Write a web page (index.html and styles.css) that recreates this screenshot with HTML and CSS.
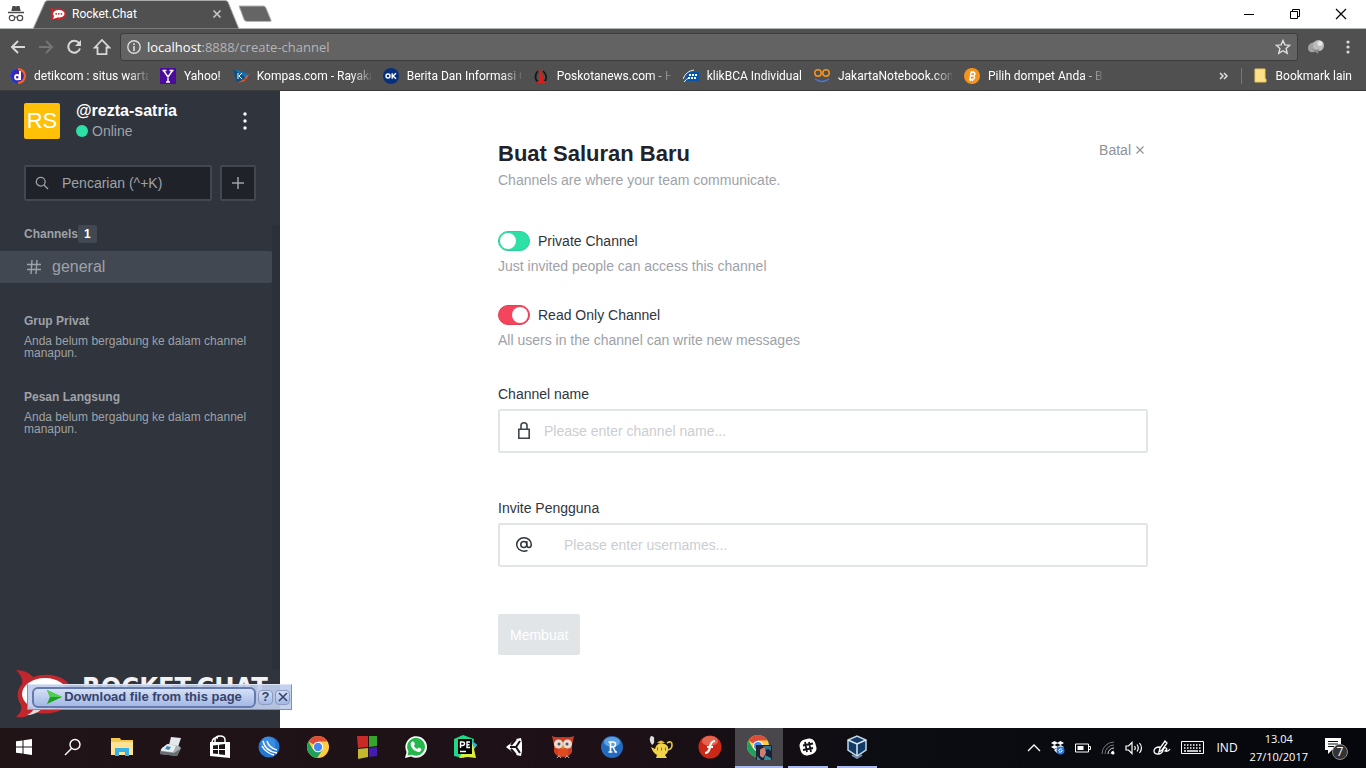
FILE: index.html
```html
<!DOCTYPE html>
<html lang="id">
<head>
<meta charset="utf-8">
<meta name="viewport" content="width=device-width, initial-scale=1">
<title>Rocket.Chat</title>
<link rel="stylesheet" href="styles.css">
</head>
<body>
<header class="browser">
  <div class="tabstrip">
    <svg class="incognito" width="16" height="18" viewBox="0 0 16 18"><path d="M4.500 1h2.200l1.300.6L9.300 1h2.200l1.200 5H3.300z" fill="#4a4a4a"/><path d="M0 7.500h16" stroke="#4a4a4a" stroke-width="1.500"/><g fill="none" stroke="#4a4a4a" stroke-width="1.200"><circle cx="4" cy="13" r="2.700"/><circle cx="12" cy="13" r="2.700"/><path d="M6.500 12.500q1.500-1 3 0"/></g></svg>
    <div class="tab">
      <svg class="tab-shape" width="208" height="29" viewBox="0 0 208 29"><path d="M1 29L13 2Q14 .5 16 .5H193Q195 .5 196 2L207 29z" fill="#505050" stroke="#a9aca9"/></svg>
      <svg class="favicon" width="16" height="14" viewBox="0 0 16 14"><path d="M0 1q3 0 4.500 1.300C11 0 16 3 16 7s-5 7-11.500 4.700Q3 13 0 13q2-2 1.500-4Q0 7 1.500 5 2 3 0 1z" fill="#d2232a"/><ellipse cx="8.800" cy="6.800" rx="5.700" ry="3.800" fill="#fff"/><path d="M3 12l1.500-4 3 2.400z" fill="#fff"/><g fill="#d2232a"><circle cx="6.200" cy="6.800" r=".9"/><circle cx="8.800" cy="6.800" r=".9"/><circle cx="11.400" cy="6.800" r=".9"/></g></svg>
      <span class="tab-title">Rocket.Chat</span>
      <button class="bare tab-close" aria-label="Tutup tab"><svg width="10" height="10" viewBox="0 0 10 10"><path d="M1.500 1.500l7 7M8.500 1.500l-7 7" stroke="#c8c8c8" stroke-width="1.600"/></svg></button>
    </div>
    <button class="bare new-tab" aria-label="Tab baru"><svg width="34" height="18" viewBox="0 0 34 18"><path d="M1 1h25q1 0 2 2l5 12q.5 1.500-1 1.500H9q-2 0-3-2z" fill="#656565" stroke="#b5b5b5"/></svg></button>
    <div class="window-controls">
      <button class="bare" aria-label="Kecilkan"><svg width="12" height="12" viewBox="0 0 12 12"><path d="M1 6.500h10" stroke="#000"/></svg></button>
      <button class="bare" aria-label="Pulihkan"><svg width="12" height="12" viewBox="0 0 12 12" fill="none" stroke="#000"><path d="M1.500 3.500h7v7h-7zM3.500 3.500v-2h7v7h-2"/></svg></button>
      <button class="bare" aria-label="Tutup"><svg width="12" height="12" viewBox="0 0 12 12"><path d="M1 1l10 10M11 1L1 11" stroke="#000" stroke-width="1.200"/></svg></button>
    </div>
  </div>
  <div class="toolbar">
    <button class="bare" aria-label="Kembali"><svg width="16" height="16" viewBox="0 0 16 16" fill="none" stroke="#d8d8d8" stroke-width="2"><path d="M15 8H2.500M8 2L2 8l6 6"/></svg></button>
    <button class="bare" aria-label="Maju"><svg width="16" height="16" viewBox="0 0 16 16" fill="none" stroke="#757575" stroke-width="2"><path d="M1 8h12.500M8 2l6 6-6 6"/></svg></button>
    <button class="bare" aria-label="Muat ulang"><svg width="16" height="16" viewBox="0 0 16 16"><path d="M13 4A6 6 0 1 0 14 9.500" fill="none" stroke="#d8d8d8" stroke-width="2"/><path d="M15 1v6H9z" fill="#d8d8d8"/></svg></button>
    <button class="bare" aria-label="Beranda"><svg width="18" height="18" viewBox="0 0 18 18"><path d="M1.800 9.500L9 2l7.200 7.500h-2.700v6.700h-9V9.500z" fill="none" stroke="#d8d8d8" stroke-width="1.800"/></svg></button>
    <div class="omnibox">
      <svg width="14" height="14" viewBox="0 0 14 14"><circle cx="7" cy="7" r="6.200" fill="none" stroke="#ddd" stroke-width="1.400"/><path d="M7 3.200v1.700M7 6v5" stroke="#ddd" stroke-width="1.600"/></svg>
      <span class="url"><b>localhost</b>:8888/create-channel</span>
      <button class="bare" aria-label="Tandai"><svg width="16" height="16" viewBox="0 0 16 16"><path d="M8 1.500l1.900 4.400 4.800.4-3.600 3.200 1.100 4.700L8 11.700l-4.200 2.500 1.100-4.700L1.300 6.300l4.800-.4z" fill="none" stroke="#ddd" stroke-width="1.400"/></svg></button>
    </div>
    <button class="bare extension" aria-label="Ekstensi"><svg width="18" height="16" viewBox="0 0 18 16"><path d="M8 3Q1 4 1 9q0 5 6 4l8-2-7-2z" fill="#a2a2a2"/><circle cx="11.500" cy="6.500" r="5.500" fill="#bcbcbc"/><circle cx="13" cy="4.500" r="2.500" fill="#e6e6e6"/><path d="M4 9q4 3 8 1l-1 5z" fill="#8a8a8a"/></svg></button>
    <button class="bare" aria-label="Menu"><svg width="4" height="14" viewBox="0 0 4 14" fill="#d8d8d8"><circle cx="2" cy="2" r="1.600"/><circle cx="2" cy="7" r="1.600"/><circle cx="2" cy="12" r="1.600"/></svg></button>
  </div>
  <nav class="bookmarks">
    <a href="#"><svg width="16" height="16" viewBox="0 0 16 16"><circle cx="8" cy="8" r="8" fill="#f26522"/><path d="M8 0a8 8 0 0 0 0 16z" fill="#1b3fbd"/><circle cx="8" cy="8" r="5.800" fill="#4221b5"/><circle cx="7.200" cy="9.200" r="2.200" fill="none" stroke="#fff" stroke-width="1.800"/><path d="M10 3v9" stroke="#fff" stroke-width="2"/></svg><span>detikcom : situs warta</span></a>
    <a href="#"><svg width="16" height="16" viewBox="0 0 16 16"><path d="M0 0h16v16H0z" fill="#4b0c9c"/><path d="M3.500 2.500L8 9l4.500-6.500M8 8.500V14M2.500 2.500h4M9.500 2.500h4M6 14h4" stroke="#fff" stroke-width="1.400" fill="none"/></svg><span>Yahoo!</span></a>
    <a href="#"><svg width="16" height="16" viewBox="0 0 16 16"><path d="M0 1l16 5-5 4z" fill="#0d74bb"/><path d="M0 1l4 14 8-6z" fill="#075088"/><path d="M16 6l-4 3 1 3zM4 15l8-4v2z" fill="#f15a24"/><path d="M5 5v6M9 5L6 8l3 3" stroke="#fff" fill="none"/></svg><span>Kompas.com - Rayaka</span></a>
    <a href="#"><svg width="16" height="16" viewBox="0 0 16 16"><circle cx="8" cy="8" r="8" fill="#05307c"/><circle cx="5" cy="8" r="2" fill="none" stroke="#fff" stroke-width="1.400"/><path d="M9.200 5.300v5.400M13 5.300L10 8l3 2.700" fill="none" stroke="#fff" stroke-width="1.400"/></svg><span>Berita Dan Informasi O</span></a>
    <a href="#"><svg width="16" height="16" viewBox="0 0 16 16"><path d="M5 3Q2 6 2.500 10 3 13 6 14M10 3q4 4 3 8-1 3-3 3" fill="none" stroke="#151515" stroke-width="1.600"/><path d="M8 1q1.500 2 1 4 1.500 3 1 8h2l1 2H3l2-2h1Q5.500 8 7 5 6.500 3 8 1z" fill="#d91e1e"/></svg><span>Poskotanews.com - H</span></a>
    <a href="#"><svg width="16" height="16" viewBox="0 0 16 16"><path d="M4 4h12v9H2z" fill="#0754a5"/><path d="M6 7h8M5 10h9" stroke="#fff" stroke-width="2" stroke-dasharray="2 1"/><path d="M0 11Q3 3 11 2M1 14q2-3 5-4" fill="none" stroke="#eee"/></svg><span>klikBCA Individual</span></a>
    <a href="#"><svg width="16" height="16" viewBox="0 0 16 16" fill="none"><circle cx="4" cy="5" r="3.200" stroke="#f7941d" stroke-width="1.500"/><circle cx="12" cy="5" r="3.200" stroke="#f7941d" stroke-width="1.500"/><path d="M1 11q7 5 14 0" stroke="#4c7bd9" stroke-width="1.500"/></svg><span>JakartaNotebook.com</span></a>
    <a href="#"><svg width="16" height="16" viewBox="0 0 16 16"><circle cx="8" cy="8" r="8" fill="#f7931a"/><path d="M6.500 4.500h3q2 .4 1.400 2-.5 1.300-2 1.300H6M9 8q1.800.4 1.400 2-.5 1.500-2.400 1.500H5M7 4.500l-1 7M7.500 3v1.500M9.500 3v1.500M6.500 11.500V13M8.500 11.500V13" fill="none" stroke="#fff" stroke-width="1.400"/></svg><span>Pilih dompet Anda - B</span></a>
    <button class="bare more" aria-label="Bookmark lainnya"><svg width="10" height="8" viewBox="0 0 10 8"><path d="M1 1l3 3-3 3M5 1l3 3-3 3" fill="none" stroke="#ddd" stroke-width="1.500"/></svg></button>
    <a class="other" href="#"><svg width="14" height="16" viewBox="0 0 14 16"><path d="M1 1h10v10h1v3H1z" fill="#fee08b" stroke="#f1c84c"/></svg><span>Bookmark lain</span></a>
  </nav>
</header>

<div class="page">
  <aside class="sidebar">
    <div class="account">
      <div class="avatar">RS</div>
      <div class="who"><strong>@rezta-satria</strong><span class="status">Online</span></div>
      <button class="bare" aria-label="Opsi"><svg width="6" height="18" viewBox="0 0 6 18" fill="#fff"><circle cx="3" cy="2" r="1.700"/><circle cx="3" cy="9" r="1.700"/><circle cx="3" cy="16" r="1.700"/></svg></button>
    </div>
    <div class="search-row">
      <label class="search"><svg width="14" height="14" viewBox="0 0 14 14" fill="none" stroke="#9ea2a8" stroke-width="1.300"><circle cx="5.700" cy="5.700" r="4.400"/><path d="M9 9l4 4"/></svg><input type="search" aria-label="Pencarian" placeholder="Pencarian (^+K)"></label>
      <button class="add" aria-label="Buat saluran"><svg width="12" height="12" viewBox="0 0 12 12"><path d="M6 0v12M0 6h12" stroke="#9ea2a8" stroke-width="1.500"/></svg></button>
    </div>
    <div class="rooms">
      <h3>Channels<span class="badge">1</span></h3>
      <a class="room" href="#"><svg width="14" height="14" viewBox="0 0 14 14"><path d="M5 0L4 14M10 0L9 14M0 4.500h14M0 9.500h14" stroke="#9ea2a8" stroke-width="1.400"/></svg>general</a>
      <section><h3>Grup Privat</h3><p>Anda belum bergabung ke dalam channel manapun.</p></section>
      <section><h3>Pesan Langsung</h3><p>Anda belum bergabung ke dalam channel manapun.</p></section>
    </div>
    <footer class="brand">
      <svg width="60" height="50" viewBox="0 0 60 50"><path d="M0 1Q11 1 17 8C35 2 56 9 56 25S35 48 18 43Q10 50 0 48 7 42 5 36C0 29 1 20 6 15 8 8 0 1 0 1z" fill="#c1272d"/><path d="M11 46q6-3 7-7l8 1q-7 6-15 6z" fill="#ddd"/><ellipse cx="29" cy="25" rx="23" ry="16" fill="#fff"/><g fill="#c1272d"><circle cx="19" cy="25" r="3"/><circle cx="29" cy="25" r="3"/><circle cx="39" cy="25" r="3"/></g></svg>
      <span>ROCKET.CHAT</span>
    </footer>
    <div class="download">
      <button class="download-main"><svg width="16" height="14" viewBox="0 0 16 14"><path d="M1 0l15 7L1 14l3-7z" fill="#18a322"/><path d="M1 0l15 7H4z" fill="#4fd04c"/></svg>Download file from this page</button>
      <button class="download-small">?</button>
      <button class="download-small" aria-label="Tutup"><svg width="10" height="10" viewBox="0 0 10 10"><path d="M1 1l8 8M9 1L1 9" stroke="#37436c" stroke-width="1.600"/></svg></button>
    </div>
  </aside>

  <main class="content">
    <form class="create">
      <div class="heading">
        <div><h1>Buat Saluran Baru</h1><p>Channels are where your team communicate.</p></div>
        <button type="button" class="bare cancel">Batal<svg width="8" height="8" viewBox="0 0 8 8"><path d="M.5.5l7 7M7.500.5l-7 7" stroke="#8f9298" stroke-width="1.200"/></svg></button>
      </div>
      <div class="options">
        <div class="option"><label><input class="switch" type="checkbox">Private Channel</label><p>Just invited people can access this channel</p></div>
        <div class="option"><label><input class="switch" type="checkbox" checked>Read Only Channel</label><p>All users in the channel can write new messages</p></div>
      </div>
      <div class="field">
        <label for="name">Channel name</label>
        <div class="box"><svg width="20" height="20" viewBox="0 0 20 20" fill="none" stroke="#3f454d" stroke-width="1.600"><path d="M4.800 8.300h10.400v9H4.800zM7 8V4.500Q7 1.800 10 1.800t3 2.700V8"/></svg><input id="name" type="text" placeholder="Please enter channel name..."></div>
      </div>
      <div class="field">
        <label for="users">Invite Pengguna</label>
        <div class="box users"><svg width="20" height="20" viewBox="0 0 20 20" fill="none" stroke="#2f343d" stroke-width="1.500"><circle cx="9.800" cy="9.500" r="3"/><path d="M12.800 6v4.300q0 2.200 2.200 2.200t2.300-3.200A7.300 6.700 0 1 0 10 16.200q2 0 3.500-.8"/></svg><input id="users" type="text" placeholder="Please enter usernames..."></div>
      </div>
      <button class="submit" disabled>Membuat</button>
    </form>
  </main>
</div>

<footer class="taskbar">
  <button class="bare" aria-label="Start"><svg width="16" height="16" viewBox="0 0 16 16" fill="#fff"><path d="M0 2.300L6.500 1.400v6.100H0zM7.500 1.200L16 0v7.500H7.500zM0 8.500h6.500v6.100L0 13.700zM7.500 8.500H16V16l-8.500-1.200z"/></svg></button>
  <button class="bare" aria-label="Cari"><svg width="18" height="18" viewBox="0 0 18 18" fill="none" stroke="#fff" stroke-width="1.400"><circle cx="11" cy="6.500" r="5"/><path d="M7.500 10.500L1 17"/></svg></button>
  <button class="bare" aria-label="File Explorer"><svg width="22" height="20" viewBox="0 0 22 20"><path d="M0 1h9l1 2h12v15H0z" fill="#f5c94c"/><path d="M0 5h22v13H0z" fill="#ffe395"/><path d="M4 11h14v8h-4v-4H8v4H4z" fill="#35b3e8"/></svg></button>
  <button class="bare" aria-label="Faks"><svg width="24" height="22" viewBox="0 0 24 22"><path d="M12 1l10 1-3 9-9-2z" fill="#e4e8ea"/><path d="M8 8l12 2 2 2-4 8-17-2 1-5z" fill="#aab0b4"/><path d="M3 12l6-4 8 2-3 6-12-1z" fill="#e8eef0"/><path d="M8 10l4 1-2 3-4-1z" fill="#398dbd"/><path d="M1 15l14 2 6-4-3 7-17-2z" fill="#656c72"/></svg></button>
  <button class="bare" aria-label="Store"><svg width="22" height="24" viewBox="0 0 22 24"><path d="M6 8V5q0-4 5-4t5 4v3M3 7q1-5 6-4" fill="none" stroke="#fff" stroke-width="1.500"/><path d="M1 7h20v16l-20-2z" fill="#fff"/><path d="M4 10.500l5-.6V14H4zM10 9.700l6-.7v5h-6zM4 15h5v4l-5-.6zM10 15h6v5l-6-.8z" fill="#1c1217"/></svg></button>
  <button class="bare" aria-label="JDownloader"><svg width="22" height="22" viewBox="0 0 22 22"><circle cx="11" cy="11" r="10.500" fill="#2376d2"/><circle cx="10" cy="8" r="7.500" fill="#4a9bea" opacity=".6"/><path d="M5 5q2 10 14 12M9 5q2 7 10 9M4 10q4 7 12 9" fill="none" stroke="#fff" stroke-width="1.400"/></svg></button>
  <button class="bare" aria-label="Chrome"><svg width="22" height="22" viewBox="0 0 22 22"><circle cx="11" cy="11" r="11" fill="#fc4"/><path d="M11 11L1.500 5.500A11 11 0 0 1 20.500 5.500H11z" fill="#dd4b39"/><path d="M11 11l-5 2.500L1.500 5.500A11 11 0 0 0 10 22l5.500-8z" fill="#1fa15d"/><circle cx="11" cy="11" r="5.200" fill="#fff"/><circle cx="11" cy="11" r="4.200" fill="#4688f4"/></svg></button>
  <button class="bare" aria-label="Winamp"><svg width="22" height="24" viewBox="0 0 22 24"><path d="M1 1h11v11L2 13z" fill="#c82b26"/><path d="M13 1h8v10l-8 1z" fill="#37a52d"/><path d="M2 14l10-1v9l-10 2z" fill="#c6b82e"/><path d="M13 13l8-1v9l-8 1z" fill="#451bb4"/></svg></button>
  <button class="bare" aria-label="WhatsApp"><svg width="22" height="22" viewBox="0 0 22 22"><path d="M0 22l1.600-6A10.800 10.800 0 1 1 6 20.500z" fill="#fff"/><path d="M2.500 19.500l1-4A8.900 8.900 0 1 1 7 18.700z" fill="#24b84c"/><path d="M7 5.500l2 .2.900 2.500-1.100 1.500q1.200 2.300 3.500 3.200l1.300-1.400 2.700 1.200q.3 3-3 3.200Q7 14.500 5.600 9 5.500 6.500 7 5.500z" fill="#fff"/></svg></button>
  <button class="bare" aria-label="PyCharm"><svg width="24" height="24" viewBox="0 0 24 24"><path d="M1 4l9-4 11 4-3 14-8 5-9-2z" fill="#21d789"/><path d="M18 5l6 5-3 4 2 9-8-1-9 1 4-7z" fill="#dcef3c"/><path d="M18 5l6 5-3 3z" fill="#18b6ef"/><path d="M5 4h14v15H5z" fill="#000"/><path d="M7.500 13V7h2q2 0 2 1.700t-2 1.800h-2M17 7h-3v5.500h3M14 9.800h2.500M7 16.500h6" fill="none" stroke="#fff" stroke-width="1.400"/></svg></button>
  <button class="bare" aria-label="Unity"><svg width="18" height="18" viewBox="0 0 18 18"><path d="M1 9l10-8 5-1 1 5v8l-1 5-5-1z" fill="#fff"/><path d="M5 9h6l4-6M11 9l4 6M11 1L6 7M11 17L6 11" stroke="#1b1116" stroke-width="2" fill="none"/></svg></button>
  <button class="bare" aria-label="Hootsuite"><svg width="24" height="24" viewBox="0 0 24 24"><path d="M1 1q4 2 11 1 7 1 11-1l-2 9v7q-2 5-9 5t-9-5v-7z" fill="#cf3e20"/><path d="M7 13h10v8H7z" fill="#dd4b22"/><circle cx="7.500" cy="9" r="4.500" fill="#e9dcd5"/><circle cx="16.500" cy="9" r="4.500" fill="#e9dcd5"/><circle cx="8" cy="9" r="1.500" fill="#555"/><circle cx="16" cy="9" r="1.500" fill="#555"/><path d="M11 11h2l-1 4z" fill="#e9af2b"/><path d="M6 23q2-4 4 0M14 23q2-4 4 0" stroke="#bbb" fill="none"/></svg></button>
  <button class="bare" aria-label="R"><svg width="22" height="22" viewBox="0 0 22 22"><circle cx="11" cy="11" r="11" fill="#236bc0"/><ellipse cx="11" cy="6" rx="8" ry="5" fill="#79b6ed" opacity=".7"/><path d="M9.500 6v10M7.500 6h5q2.500.5 2 3-.5 2-2.500 2H10M12 11l2.500 5M7.500 16h4M13.500 16h2.500" fill="none" stroke="#fff" stroke-width="1.600"/></svg></button>
  <button class="bare" aria-label="Teko"><svg width="24" height="24" viewBox="0 0 24 24"><path d="M2 1q4 0 3 4 1 3-2 5Q-1 5 2 1z" fill="#ddd"/><path d="M2 12l4 2q1-5 6-6 6 1 7 4 1 5-3 8l2 3H7l1-3q-4-2-6-8z" fill="#f0d24b"/><path d="M18 8q5-3 5 2 0 4-4 5" fill="none" stroke="#e2c33c" stroke-width="1.700"/><path d="M8 8q4-5 8 0z" fill="#dfbd35"/><path d="M8 14h1M12 14h1M16 14h1" stroke="#bb4a25" stroke-width="3"/></svg></button>
  <button class="bare" aria-label="Flash"><svg width="24" height="24" viewBox="0 0 24 24"><circle cx="12" cy="12" r="11.500" fill="#ca2918"/><ellipse cx="12" cy="6" rx="8" ry="5" fill="#ef7d67" opacity=".7"/><path d="M17 6q-4 0-5 6t-5 6M9 12h6" stroke="#fff" stroke-width="2.200" fill="none"/></svg></button>
  <button class="bare active" aria-label="Chrome terbuka"><svg width="26" height="26" viewBox="0 0 26 26"><circle cx="12" cy="12" r="11" fill="#fc4"/><path d="M12 12L2.500 6.500A11 11 0 0 1 21.500 6.500H12z" fill="#dd4b39"/><path d="M12 12l-5 2.500L2.500 6.500A11 11 0 0 0 11 23l5.500-8z" fill="#1fa15d"/><circle cx="12" cy="12" r="5.200" fill="#fff"/><circle cx="12" cy="12" r="4" fill="#4688f4"/><path d="M10 11h16v15H10z" fill="#17233b"/><path d="M14 15l5-2 1 6-3 5-3-2z" fill="#c98078"/><path d="M19 21l6 3v2h-7zM11 22l4 4h-4z" fill="#338d98"/><path d="M17 12h8v5l-3-2-2 1z" fill="#2f7188"/><path d="M10 11h8l-4 5-2 6h-2z" fill="#282330"/></svg></button>
  <button class="bare running" aria-label="Slack"><svg width="18" height="18" viewBox="0 0 18 18"><rect x="1" y="1" width="16" height="16" rx="6" fill="#fff" transform="rotate(-16 9 9)"/><path d="M6 4l2 10M10 4l2 10M4 7.500l10-2M4 12l10-2" stroke="#17151c" stroke-width="1.800"/></svg></button>
  <button class="bare running" aria-label="VirtualBox"><svg width="22" height="24" viewBox="0 0 22 24"><path d="M2 5l9-4 9 4v10l-9 6-9-6z" fill="#123a66" stroke="#c3d7ea" stroke-width="1.500"/><path d="M2 5l9 4 9-4M11 9v12" stroke="#dce9f5" stroke-width="1.500" fill="none"/><path d="M6 20l5 3 5-3" stroke="#738eae" stroke-width="2" fill="none"/></svg></button>
  <div class="tray">
    <svg width="14" height="8" viewBox="0 0 14 8"><path d="M1 7l6-6 6 6" fill="none" stroke="#fff" stroke-width="1.300"/></svg>
    <svg width="14" height="14" viewBox="0 0 14 14"><path d="M3.500 0L7 2 3.500 4 0 2zM9.500 0L13 2 9.500 4 6 2zM3.500 4L7 6 3.500 8 0 6zM9.500 4L13 6 9.500 8 6 6zM3 9l3-2v5z" fill="#fff"/><circle cx="9.500" cy="9.500" r="4" fill="#1f77e8"/><path d="M7.500 10q1-3 3.500-2M11.500 9q-1 3-3.500 2" stroke="#fff" fill="none"/></svg>
    <svg width="16" height="10" viewBox="0 0 16 10"><path d="M.5 1h13v8H.5zM14 3.500h1.500v3H14" fill="none" stroke="#fff"/><path d="M2.500 3h6v4h-6z" fill="#fff"/></svg>
    <svg width="14" height="14" viewBox="0 0 14 14" fill="none"><path d="M1 13A12 12 0 0 1 13 1M4 13a9 9 0 0 1 9-9" stroke="#777"/><path d="M7 13a6 6 0 0 1 6-6M10 13a3 3 0 0 1 3-3" stroke="#ddd"/><circle cx="12" cy="12" r="1.500" fill="#fff"/></svg>
    <svg width="18" height="14" viewBox="0 0 18 14" fill="none" stroke="#fff" stroke-width="1.200"><path d="M1 5h2.500L7 1.500v11L3.500 9H1zM9.500 5q1.500 2 0 4M12 3.500q2.500 3.500 0 7M14.500 2q4 5 0 10"/></svg>
    <svg width="18" height="16" viewBox="0 0 18 16" fill="none" stroke="#fff" stroke-width="1.300"><path d="M6 12l1-4 5-7 2 2-5 7zM7 7Q1 7 1 11q0 3 4 3t5-4q1-3 3-2t-1 3q3 1 5-2"/></svg>
    <svg width="24" height="14" viewBox="0 0 24 14" fill="none" stroke="#fff"><path d="M.5.500h22v12H.5z"/><path d="M3 4h18M3 7h18" stroke-width="1.500" stroke-dasharray="1.500 1.500"/><path d="M3 10h2M6 10h11M18 10h2" stroke-width="1.500"/></svg>
    <span class="lang">IND</span>
    <time class="clock"><span>13.04</span><span>27/10/2017</span></time>
    <svg class="notice" width="26" height="26" viewBox="0 0 26 26"><path d="M1 3h16v12H8l-4 4v-4H1z" fill="#fff"/><path d="M4 6.500h10M4 9h10M4 11.500h6" stroke="#111"/><circle cx="16" cy="17" r="7.500" fill="#333" stroke="#888"/><text x="16" y="21" text-anchor="middle" class="count">7</text></svg>
  </div>
</footer>
</body>
</html>
```
FILE: styles.css
```css
* { box-sizing: border-box; }
body {
  margin: 0;
  min-height: 100vh;
  display: flex;
  flex-direction: column;
  font: 14px/20px "Liberation Sans", Arial, sans-serif;
}
h1, h3, p { margin: 0; }
a { color: inherit; text-decoration: none; }
svg { display: block; flex: none; }
button, input { font: inherit; }
.bare {
  display: flex;
  align-items: center;
  justify-content: center;
  padding: 0;
  border: 0;
  background: none;
  color: inherit;
}

/* Browser chrome */
.browser { background: #505050; color: #fff; font: 12px/16px Roboto, "Noto Sans", sans-serif; }
.tabstrip {
  display: flex;
  align-items: center;
  height: 29px;
  background: #fff;
  border-bottom: 1px solid #b4b8b4;
}
.incognito { margin: 0 8px; }
.tab {
  position: relative;
  display: flex;
  align-items: center;
  gap: 6px;
  width: 206px;
  height: 29px;
  padding: 0 16px 0 18px;
}
.tab-shape { position: absolute; inset: 0; }
.favicon, .tab-title, .tab-close { position: relative; }
.tab-title { flex: 1; }
.new-tab { height: 28px; }
.window-controls { display: flex; margin-left: auto; margin-right: 2px; }
.window-controls button { width: 46px; height: 28px; }
.toolbar { display: flex; align-items: center; height: 36px; padding: 0 4px; }
.toolbar > button { width: 28px; height: 28px; }
.toolbar > .extension { width: 36px; }
.omnibox {
  flex: 1;
  display: flex;
  align-items: center;
  gap: 6px;
  height: 28px;
  margin-left: 4px;
  padding: 0 6px;
  border: 1px solid #3c3c3c;
  border-radius: 3px;
  background: #636363;
}
.url { flex: 1; font-family: "Open Sans", "Noto Sans", sans-serif; font-size: 13px; color: #b4b4b4; }
.url b { font-weight: 400; color: #fff; }
.bookmarks {
  display: flex;
  align-items: center;
  gap: 12px;
  height: 26px;
  padding: 0 14px 4px 10px;
  border-bottom: 1px solid #3a3a3a;
  white-space: nowrap;
}
.bookmarks a { display: flex; align-items: center; gap: 8px; }
.bookmarks a span {
  max-width: 114px;
  overflow: hidden;
  mask-image: linear-gradient(90deg, #000 94px, transparent 118px);
}
.bookmarks .more { margin-left: auto; }
.bookmarks .other { padding-left: 12px; border-left: 1px solid #777; }

/* Application */
.page { flex: 1; display: flex; }
.sidebar {
  position: relative;
  display: flex;
  flex-direction: column;
  flex: none;
  width: 280px;
  background: #2f343d;
  color: #9ea2a8;
}
.account { display: flex; align-items: center; gap: 16px; padding: 10px 32px 0 24px; }
.avatar {
  width: 36px;
  height: 36px;
  border-radius: 2px;
  background: #ffc107;
  color: #fff;
  font-size: 22px;
  line-height: 36px;
  text-align: center;
}
.who { flex: 1; display: flex; flex-direction: column; }
.who strong { color: #fff; font-size: 16px; }
.status { display: flex; align-items: center; gap: 4px; }
.status::before { content: ""; width: 12px; height: 12px; border-radius: 50%; background: #2de0a5; }
.search-row { display: flex; gap: 8px; padding: 24px 24px; }
.search, .add {
  display: flex;
  align-items: center;
  height: 36px;
  border: 2px solid #414852;
  border-radius: 2px;
  background: #1f2329;
}
.search { flex: 1; gap: 13px; padding: 0 9px; }
.search input { width: 100%; min-width: 0; padding: 0; border: 0; outline: 0; background: none; color: #fff; }
.search input::placeholder { color: #9ea2a8; opacity: 1; }
.add { width: 36px; padding: 0; justify-content: center; }
.rooms { flex: 1; border-right: 8px solid #2c3039; font-size: 12px; }
.rooms h3 { display: flex; align-items: center; padding-left: 24px; font-size: 12px; line-height: 18px; }
.badge { padding: 0 6px; border-radius: 2px; background: #414852; color: #fff; }
.room {
  display: flex;
  align-items: center;
  gap: 11px;
  height: 32px;
  margin: 8px 0 29px;
  padding-left: 27px;
  border-radius: 0 2px 2px 0;
  background: #414852;
  font-size: 16px;
}
.rooms section { margin-bottom: 29px; }
.rooms p { padding: 5px 16px 0 24px; line-height: 12px; }
.brand { display: flex; gap: 6px; padding: 0 14px 9px 16px; }
.brand span { color: #f2f2f2; font: bold 27px/38px "Liberation Sans Narrow", "DejaVu Sans Condensed", sans-serif; }
.download {
  position: absolute;
  left: 27px;
  bottom: 18px;
  display: flex;
  align-items: center;
  gap: 2px;
  height: 26px;
  padding: 0 1px 0 4px;
  border: 1px solid #7f8fae;
  border-top-color: #dce5f5;
  background: rgba(190, 206, 235, .93);
  white-space: nowrap;
}
.download button {
  display: flex;
  align-items: center;
  justify-content: center;
  border: 1px solid #8d9bc2;
  background: linear-gradient(#d5e0f6, #a3b8e4);
  color: #37436c;
  font-weight: 700;
  font-size: 13px;
}
.download .download-main { width: 224px; height: 21px; padding: 0; gap: 2px; border: 2px solid #6479ae; border-radius: 6px; }
.download .download-small { width: 15px; height: 15px; padding: 0; border-radius: 4px; }

.content { flex: 1; padding: 49px 24px 48px; background: #fff; }
.create { max-width: 650px; margin: 0 auto; color: #2f343d; }
.heading { display: flex; justify-content: space-between; align-items: flex-start; margin-bottom: 41px; }
.heading h1 { margin-bottom: 2px; color: #1f2329; font-size: 22px; line-height: 28px; }
.create p { color: #9ea2a8; }
.cancel { gap: 5px; padding-right: 4px; color: #8f9298; }
.options { display: grid; gap: 29px; margin-bottom: 34px; }
.option label { display: flex; gap: 8px; margin-bottom: 5px; }
.switch {
  appearance: none;
  width: 32px;
  height: 20px;
  margin: 0;
  padding: 1px;
  border: 1px solid #2bcf99;
  border-radius: 10px;
  background: #2de0a5;
}
.switch::before { content: ""; display: block; width: 16px; height: 16px; border-radius: 50%; background: #fff; }
.switch:checked { background: #f5455c; border-color: #e0405a; }
.switch:checked::before { margin-left: auto; }
.field { margin-bottom: 45px; }
.field label { display: block; margin-bottom: 5px; }
.box { display: flex; align-items: center; gap: 10px; height: 44px; padding: 0 14px; border: 2px solid #e1e5e8; border-radius: 2px; }
.box.users { gap: 30px; }
.box input { flex: 1; min-width: 0; padding: 0; border: 0; outline: 0; background: none; }
.box input::placeholder { color: #cbced1; opacity: 1; }
.submit { display: block; margin-top: 47px; padding: 11px 12px 10px; border: 0; border-radius: 2px; background: #e1e5e8; color: #fff; }

/* Desktop taskbar */
.taskbar {
  display: flex;
  align-items: stretch;
  gap: 1px;
  height: 40px;
  background: linear-gradient(90deg, #211417, #1d1117 45%, #0c0d12 65%, #05070d);
  color: #fff;
  font: 12px/18px "Open Sans", "Noto Sans", sans-serif;
}
.taskbar > button { width: 48px; border-bottom: 2px solid transparent; }
.taskbar > .active { background: #4a474c; border-color: #a9baf0; }
.taskbar > .running { background: linear-gradient(#a9baf0, #a9baf0) center bottom / 40px 2px no-repeat border-box; }
.tray { display: flex; align-items: center; gap: 10px; margin-left: auto; padding-right: 16px; }
.lang { padding: 0 2px; }
.clock { display: flex; flex-direction: column; align-items: center; font-size: 11px; }
.notice { margin-left: 6px; }
.count { fill: #fff; font: 12px "Open Sans", sans-serif; }
```
